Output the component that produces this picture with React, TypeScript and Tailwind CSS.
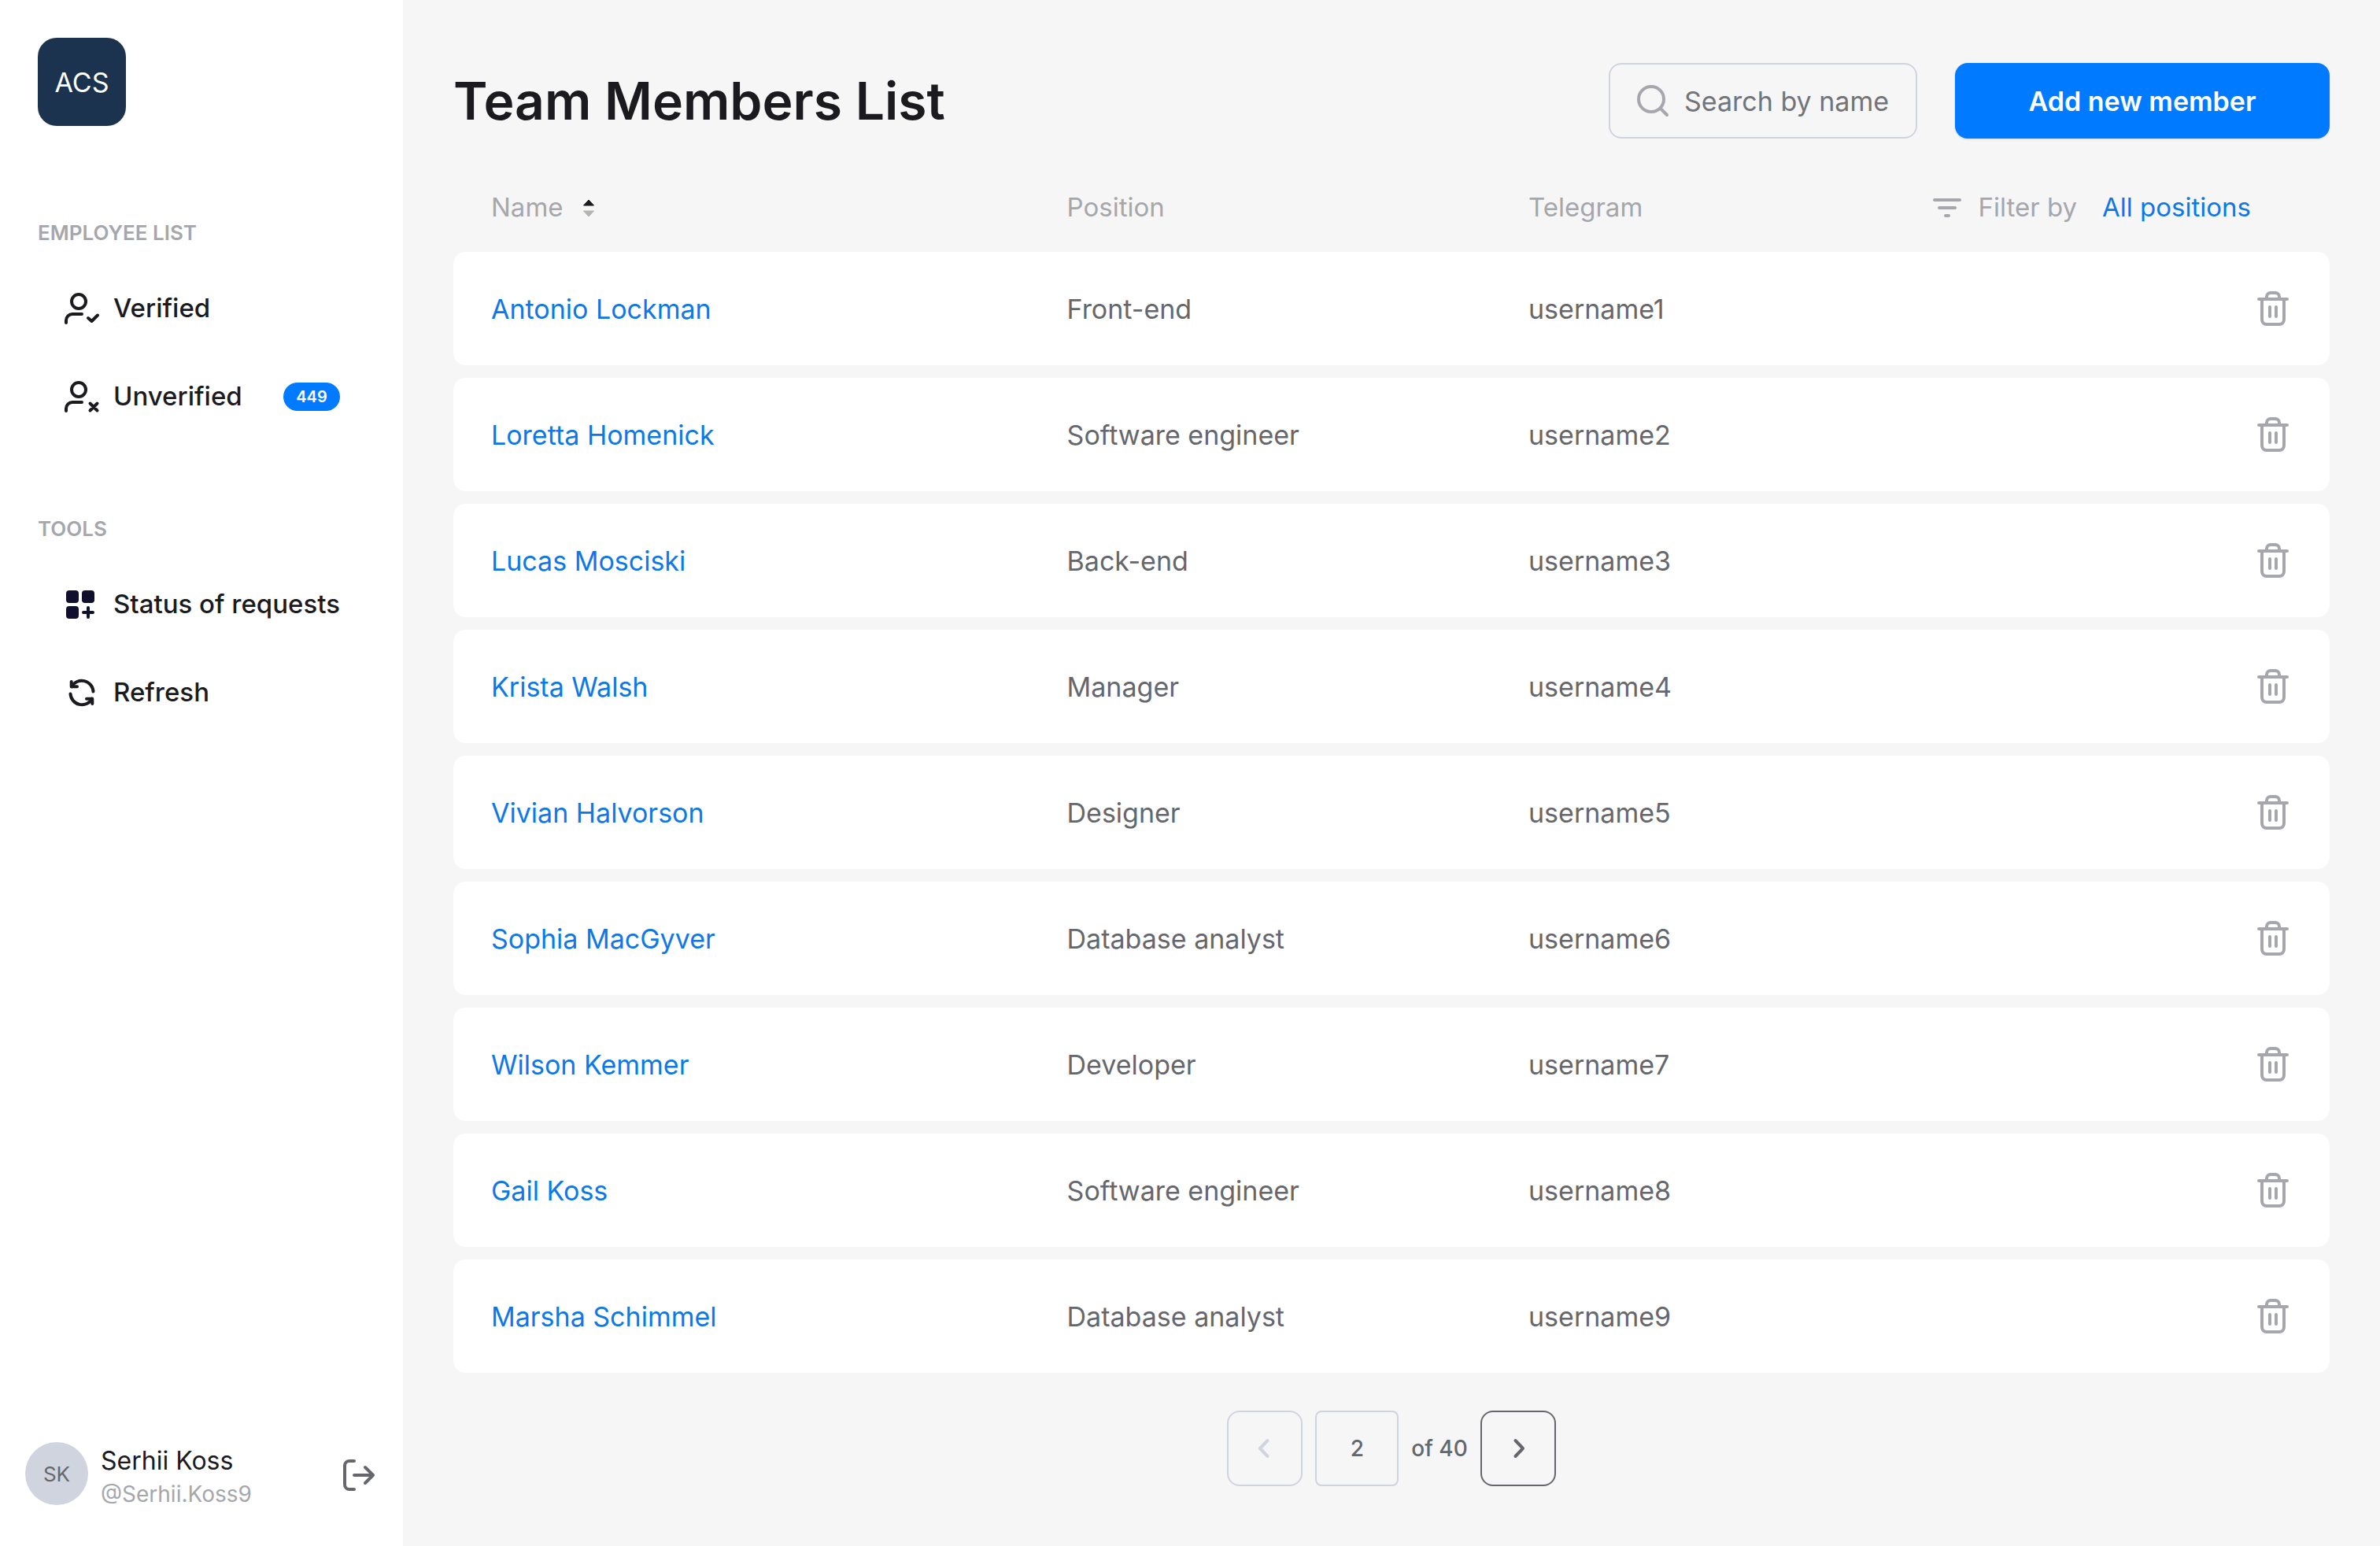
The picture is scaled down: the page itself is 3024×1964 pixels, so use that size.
import type { ReactNode } from "react";

type Member = { name: string; position: string; telegram: string };

const members: Member[] = [
  { name: "Antonio Lockman", position: "Front-end", telegram: "username1" },
  { name: "Loretta Homenick", position: "Software engineer", telegram: "username2" },
  { name: "Lucas Mosciski", position: "Back-end", telegram: "username3" },
  { name: "Krista Walsh", position: "Manager", telegram: "username4" },
  { name: "Vivian Halvorson", position: "Designer", telegram: "username5" },
  { name: "Sophia MacGyver", position: "Database analyst", telegram: "username6" },
  { name: "Wilson Kemmer", position: "Developer", telegram: "username7" },
  { name: "Gail Koss", position: "Software engineer", telegram: "username8" },
  { name: "Marsha Schimmel", position: "Database analyst", telegram: "username9" },
];

function Icon({ children }: { children: ReactNode }) {
  return (
    <svg
      className="size-12 shrink-0"
      viewBox="0 0 48 48"
      fill="none"
      stroke="currentColor"
      strokeWidth="4"
      strokeLinecap="round"
      strokeLinejoin="round"
      aria-hidden="true"
    >
      {children}
    </svg>
  );
}

const UserCheckIcon = () => (
  <Icon>
    <circle cx="20" cy="15" r="9" />
    <path d="M4 42v-3a8 8 0 0 1 8-8h12M32 36l4.5 4L44 32.5" />
  </Icon>
);

const UserCrossIcon = () => (
  <Icon>
    <circle cx="20" cy="15" r="9" />
    <path d="M4 42v-3a8 8 0 0 1 8-8h12M34.5 32.5l9 9M43.5 32.5l-9 9" />
  </Icon>
);

const GridPlusIcon = () => (
  <Icon>
    <g className="text-[#10102d]" fill="currentColor" stroke="none">
      <rect x="4" y="6" width="16" height="16" rx="4" />
      <rect x="24" y="6" width="16" height="16" rx="4" />
      <rect x="4" y="26" width="16" height="16" rx="4" />
      <rect x="24" y="32" width="16" height="4" rx="2" />
      <rect x="30" y="26" width="4" height="16" rx="2" />
    </g>
  </Icon>
);

const RefreshIcon = () => (
  <Icon>
    <path d="M38.5 22.5A14.7 14.7 0 0 0 11 16.3" />
    <path d="M10.7 10v6.3H18" />
    <path d="M9.5 25.5A14.7 14.7 0 0 0 37 31.7" />
    <path d="M37.3 38v-6.3H30" />
  </Icon>
);

const LogoutIcon = () => (
  <Icon>
    <path d="M18 6h-6a6 6 0 0 0-6 6v24a6 6 0 0 0 6 6h6M18 24h24M32 14l10 10-10 10" />
  </Icon>
);

const SearchIcon = () => (
  <Icon>
    <circle cx="22" cy="22" r="16" />
    <path d="M34 34l8 8" />
  </Icon>
);

const FilterIcon = () => (
  <Icon>
    <path d="M8 14h32M14 24h20M22 34h4" />
  </Icon>
);

const TrashIcon = () => (
  <Icon>
    <path d="M6 12h36M10 12v26a6 6 0 0 0 6 6h16a6 6 0 0 0 6-6V12M16 12V9a5 5 0 0 1 5-5h6a5 5 0 0 1 5 5v3M20 22v12M28 22v12" />
  </Icon>
);

const SortIcon = () => (
  <svg className="h-6 w-4" viewBox="0 0 16 24" strokeWidth="1" strokeLinejoin="round" aria-hidden="true">
    <path d="M8 2l6.5 7h-13z" fill="#1b1b1f" stroke="#1b1b1f" />
    <path d="M8 23l6.5-7h-13z" fill="#b4b4b4" stroke="#b4b4b4" />
  </svg>
);

function NavItem({ icon, label, badge }: { icon: ReactNode; label: string; badge?: string }) {
  return (
    <li>
      <a href="#" className="flex h-28 items-center gap-4 px-20 text-[33px] font-medium text-[#1b1b1f]">
        {icon}
        <span className="whitespace-nowrap">{label}</span>
        {badge && (
          <span className="ml-auto flex h-9 w-18 items-center justify-center rounded-full bg-[#007bff] text-[20px] font-semibold text-white">
            {badge}
          </span>
        )}
      </a>
    </li>
  );
}

function NavSection({ title, children }: { title: string; children: ReactNode }) {
  return (
    <section>
      <h2 className="mb-6 px-12 text-[26px] leading-8 font-semibold text-[#a5a7ad]">{title}</h2>
      <ul>{children}</ul>
    </section>
  );
}

function Sidebar() {
  return (
    <aside className="flex w-128 shrink-0 flex-col bg-white pt-12 pb-11">
      <a
        href="#"
        className="ml-12 flex size-28 items-center justify-center rounded-3xl bg-[#1b334e] text-[34px] text-white"
      >
        ACS
      </a>
      <nav className="mt-30 flex flex-col gap-24">
        <NavSection title="EMPLOYEE LIST">
          <NavItem icon={<UserCheckIcon />} label="Verified" />
          <NavItem icon={<UserCrossIcon />} label="Unverified" badge="449" />
        </NavSection>
        <NavSection title="TOOLS">
          <NavItem icon={<GridPlusIcon />} label="Status of requests" />
          <NavItem icon={<RefreshIcon />} label="Refresh" />
        </NavSection>
      </nav>
      <div className="mt-auto flex items-start gap-4 px-8">
        <div className="flex size-20 items-center justify-center rounded-full bg-[#d0d4de] text-[26px] text-[#65676d]">
          SK
        </div>
        <div className="pt-1">
          <p className="text-[32px] leading-10 text-[#1b1b1f]">Serhii Koss</p>
          <p className="text-[28px] leading-11 text-[#a5a7ad]">@Serhii.Koss9</p>
        </div>
        <button type="button" aria-label="Log out" className="mt-[18px] ml-auto text-[#65676d]">
          <LogoutIcon />
        </button>
      </div>
    </aside>
  );
}

function PageHeader() {
  return (
    <header className="flex items-center gap-12">
      <h1 className="mr-auto text-[66px] leading-24 font-semibold text-[#1b1b1f]">Team Members List</h1>
      <label className="flex h-24 w-98 items-center gap-4 rounded-2xl border-2 border-[#d0d4de] pl-[30px] text-[#a5a7ad]">
        <SearchIcon />
        <input
          type="search"
          aria-label="Search by name"
          placeholder="Search by name"
          className="min-w-0 flex-1 bg-transparent text-[34px] text-[#65676d] outline-none placeholder:text-[#72747a]"
        />
      </label>
      <button
        type="button"
        className="h-24 w-119 rounded-2xl bg-[#007bff] text-[34px] font-semibold text-white shadow-sm"
      >
        Add new member
      </button>
    </header>
  );
}

function MembersTable() {
  return (
    <table className="mt-8 w-full table-fixed border-separate border-spacing-x-0 border-spacing-y-4 text-left text-[34px]">
      <thead>
        <tr className="h-20 text-[33px] text-[#a5a7ad]">
          <th className="w-[32.7%] pl-12 font-normal">
            <button type="button" className="flex items-center gap-6">
              Name
              <SortIcon />
            </button>
          </th>
          <th className="w-[24.6%] font-normal">Position</th>
          <th className="font-normal">Telegram</th>
          <th className="w-[24%] pr-25 font-normal">
            <div className="flex items-center justify-end gap-4">
              <FilterIcon />
              <label htmlFor="position-filter" className="mr-4 whitespace-nowrap">
                Filter by
              </label>
              <select id="position-filter" className="appearance-none bg-transparent text-[#0f78e6]">
                <option>All positions</option>
              </select>
            </div>
          </th>
        </tr>
      </thead>
      <tbody>
        {members.map((m) => (
          <tr key={m.telegram} className="h-36 text-[#65676d]">
            <td className="rounded-l-2xl bg-white pl-12">
              <a href="#" className="text-[#0f78e6]">
                {m.name}
              </a>
            </td>
            <td className="bg-white">{m.position}</td>
            <td className="bg-white">{m.telegram}</td>
            <td className="rounded-r-2xl bg-white pr-12">
              <button type="button" aria-label={`Delete ${m.name}`} className="ml-auto block text-[#a5a7ad]">
                <TrashIcon />
              </button>
            </td>
          </tr>
        ))}
      </tbody>
    </table>
  );
}

function Pagination() {
  return (
    <nav
      aria-label="Pagination"
      className="mt-8 flex items-center justify-center gap-4 text-[28px] font-medium text-[#65676d]"
    >
      <button
        type="button"
        aria-label="Previous page"
        disabled
        className="flex size-24 items-center justify-center rounded-2xl border-2 border-[#d0d4de] text-[#d0d4de]"
      >
        <Icon>
          <path d="M27.5 14L18 24l9.5 10" />
        </Icon>
      </button>
      <input
        type="text"
        aria-label="Page"
        defaultValue="2"
        className="h-24 w-[106px] rounded-lg border-2 border-[#d0d4de] bg-transparent text-center"
      />
      <span>of 40</span>
      <button
        type="button"
        aria-label="Next page"
        className="flex size-24 items-center justify-center rounded-2xl border-2 border-[#65676d]"
      >
        <Icon>
          <path d="M20.5 14L30 24l-9.5 10" />
        </Icon>
      </button>
    </nav>
  );
}

export default function App() {
  return (
    <div className="flex min-h-screen bg-[#f6f6f6] font-['Inter',sans-serif]">
      <Sidebar />
      <main className="min-w-0 flex-1 px-16 pt-20">
        <PageHeader />
        <MembersTable />
        <Pagination />
      </main>
    </div>
  );
}
